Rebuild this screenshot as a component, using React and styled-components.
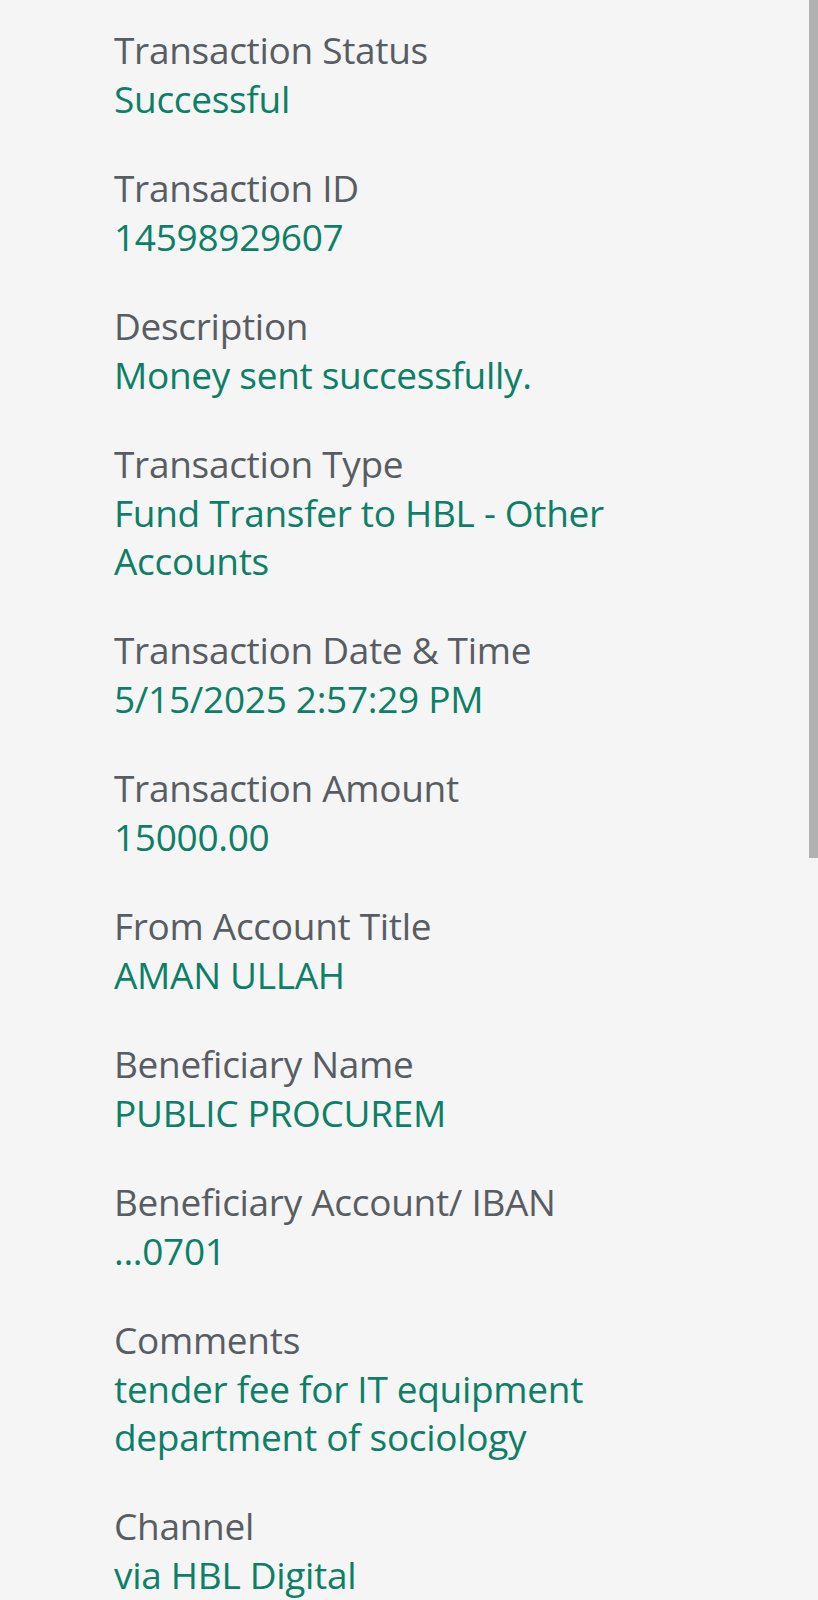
import React from 'react'
import styled, { createGlobalStyle } from 'styled-components'

const GlobalStyle = createGlobalStyle`
  html, body {
    margin: 0;
    padding: 0;
    background: #f5f5f5;
  }
  body {
    font-family: 'Open Sans', 'Noto Sans', sans-serif;
    -webkit-font-smoothing: antialiased;
  }
`

const Screen = styled.div`
  position: relative;
  width: 818px;
  height: 1600px;
  overflow: hidden;
  background: #f5f5f5;
  box-sizing: border-box;
  padding: 24px 0 0 114px;
`

const List = styled.div`
  display: flex;
  flex-direction: column;
  gap: 39px;
  width: 600px;
`

const Item = styled.div`
  display: flex;
  flex-direction: column;
`

const Label = styled.div`
  font-size: 37px;
  line-height: 51px;
  color: #585d63;
  letter-spacing: -0.3px;
`

const Value = styled.div`
  font-size: 37px;
  line-height: 48px;
  color: #0b7f67;
  letter-spacing: -0.3px;
`

const ScrollThumb = styled.div`
  position: absolute;
  top: 0;
  right: 0;
  width: 9px;
  height: 858px;
  background: #b1b1b1;
`

const rows = [
  ['Transaction Status', 'Successful'],
  ['Transaction ID', '14598929607'],
  ['Description', 'Money sent successfully.'],
  ['Transaction Type', 'Fund Transfer to HBL - Other Accounts'],
  ['Transaction Date & Time', '5/15/2025 2:57:29 PM'],
  ['Transaction Amount', '15000.00'],
  ['From Account Title', 'AMAN ULLAH'],
  ['Beneficiary Name', 'PUBLIC PROCUREM'],
  ['Beneficiary Account/ IBAN', '...0701'],
  ['Comments', 'tender fee for IT equipment department of sociology'],
  ['Channel', 'via HBL Digital'],
]

export default function App() {
  return (
    <>
      <GlobalStyle />
      <Screen>
        <List>
          {rows.map(([label, value]) => (
            <Item key={label}>
              <Label>{label}</Label>
              <Value>{value}</Value>
            </Item>
          ))}
        </List>
        <ScrollThumb />
      </Screen>
    </>
  )
}
